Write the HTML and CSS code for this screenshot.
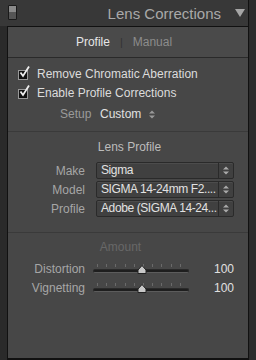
FILE: index.html
```html
<!DOCTYPE html>
<html lang="en">
<head>
    <meta charset="UTF-8">
    <title>Lens Corrections</title>
    <link rel="stylesheet" href="styles.css">
</head>
<body>
    <div class="app">
        <div class="edge-left"></div>
        <div class="main">
            <div class="header">
                <span class="toggle"></span>
                <span class="title">Lens Corrections</span>
                <span class="collapse"></span>
            </div>

            <div class="panel">
                <div class="tabs">
                    <span class="tab active">Profile</span>
                    <span class="tab-sep">|</span>
                    <span class="tab">Manual</span>
                </div>

                <div class="section options">
                    <label class="check-row">
                        <span class="checkbox">
                            <svg width="14" height="14" viewBox="0 0 14 14"><path d="M2.5 7.5 L5 11 L11 1.5" fill="none" stroke="#eee" stroke-width="1.8"/></svg>
                        </span>
                        Remove Chromatic Aberration
                    </label>
                    <label class="check-row">
                        <span class="checkbox">
                            <svg width="14" height="14" viewBox="0 0 14 14"><path d="M2.5 7.5 L5 11 L11 1.5" fill="none" stroke="#eee" stroke-width="1.8"/></svg>
                        </span>
                        Enable Profile Corrections
                    </label>
                    <div class="setup-row">
                        <span class="setup-label">Setup</span>
                        <span class="setup-value">Custom</span>
                        <span class="spin small">
                            <svg width="6" height="9" viewBox="0 0 6 9"><path d="M0 3.5 L3 0.5 L6 3.5 Z M0 5.5 L3 8.5 L6 5.5 Z" fill="#999"/></svg>
                        </span>
                    </div>
                </div>

                <div class="section profile">
                    <div class="section-title">Lens Profile</div>
                    <div class="field-row">
                        <span class="field-label">Make</span>
                        <div class="select">
                            <span class="select-text">Sigma</span>
                            <span class="select-spin"><svg width="6" height="9" viewBox="0 0 6 9"><path d="M0 3.5 L3 0.5 L6 3.5 Z M0 5.5 L3 8.5 L6 5.5 Z" fill="#aaa"/></svg></span>
                        </div>
                    </div>
                    <div class="field-row">
                        <span class="field-label">Model</span>
                        <div class="select">
                            <span class="select-text">SIGMA 14-24mm F2....</span>
                            <span class="select-spin"><svg width="6" height="9" viewBox="0 0 6 9"><path d="M0 3.5 L3 0.5 L6 3.5 Z M0 5.5 L3 8.5 L6 5.5 Z" fill="#aaa"/></svg></span>
                        </div>
                    </div>
                    <div class="field-row">
                        <span class="field-label">Profile</span>
                        <div class="select">
                            <span class="select-text">Adobe (SIGMA 14-24...</span>
                            <span class="select-spin"><svg width="6" height="9" viewBox="0 0 6 9"><path d="M0 3.5 L3 0.5 L6 3.5 Z M0 5.5 L3 8.5 L6 5.5 Z" fill="#aaa"/></svg></span>
                        </div>
                    </div>
                </div>

                <div class="section amount">
                    <div class="section-title dim">Amount</div>
                    <div class="slider-row">
                        <span class="field-label">Distortion</span>
                        <div class="slider">
                            <div class="ticks"></div>
                            <div class="track"></div>
                            <svg class="thumb" width="10" height="9" viewBox="0 0 10 9"><path d="M5 0.5 L9 5 L9 8.5 L1 8.5 L1 5 Z" fill="#c8c8c8" stroke="#222" stroke-width="1"/></svg>
                        </div>
                        <span class="slider-value">100</span>
                    </div>
                    <div class="slider-row">
                        <span class="field-label">Vignetting</span>
                        <div class="slider">
                            <div class="ticks"></div>
                            <div class="track"></div>
                            <svg class="thumb" width="10" height="9" viewBox="0 0 10 9"><path d="M5 0.5 L9 5 L9 8.5 L1 8.5 L1 5 Z" fill="#c8c8c8" stroke="#222" stroke-width="1"/></svg>
                        </div>
                        <span class="slider-value">100</span>
                    </div>
                </div>
            </div>
        </div>
        <div class="edge-right"></div>
    </div>
</body>
</html>
```

FILE: styles.css
```css
body {
    margin: 0;
    padding: 0;
    background-color: #2b2b2b;
    font-family: "Liberation Sans", Arial, sans-serif;
    font-size: 12px;
    color: #dcdcdc;
}

.app {
    display: flex;
    height: 360px;
    overflow: hidden;
}

.edge-left {
    width: 7px;
    flex: none;
    background-color: #2a2a2a;
    border-right: 1px solid #111;
}

.edge-right {
    width: 8px;
    flex: none;
    background-color: #2b2b2b;
    border-left: 1px solid #111;
    box-sizing: border-box;
}

.main {
    flex: 1;
    display: flex;
    flex-direction: column;
    background-color: #2b2b2b;
}

/* header */
.header {
    height: 26px;
    display: flex;
    align-items: center;
    background-color: #383838;
    margin-left: -8px;
    padding-left: 8px;
    margin-right: -8px;
    padding-right: 10px;
}

.toggle {
    width: 7px;
    height: 13px;
    border: 1px solid #1a1a1a;
    border-radius: 1px;
    background: linear-gradient(#8a8a8a 0, #8a8a8a 50%, #555 50%, #555 100%);
    margin-top: -1px;
}

.title {
    flex: 1;
    text-align: right;
    font-size: 15px;
    color: #a9a9a9;
    padding-right: 14px;
    padding-top: 1px;
}

.collapse {
    width: 0;
    height: 0;
    border-left: 5px solid transparent;
    border-right: 5px solid transparent;
    border-top: 8px solid #a6a6a6;
    margin-right: 1px;
}

/* panel */
.panel {
    flex: 1;
    background-color: #474747;
    border-top: 1px solid #111;
    border-bottom: 2px solid #111;
}

.tabs {
    height: 30px;
    display: flex;
    justify-content: center;
    align-items: center;
    gap: 9px;
    background-color: #4a4a4a;
    border-bottom: 1px solid #2a2a2a;
    padding-right: 8px;
}

.tab {
    color: #8c8c8c;
}

.tab.active {
    color: #e6e6e6;
}

.tab-sep {
    color: #333;
    font-size: 11px;
    margin: 0 1px;
}

.section {
    border-bottom: 1px solid #3a3a3a;
}

.options {
    padding: 6px 0 7px 10px;
}

.check-row {
    display: flex;
    align-items: center;
    height: 19px;
    gap: 9px;
}

.checkbox {
    width: 8px;
    height: 8px;
    border: 1px solid #999;
    background-color: #111;
    position: relative;
    margin-top: 2px;
}

.checkbox svg {
    position: absolute;
    left: -1px;
    top: -6px;
}

.setup-row {
    display: flex;
    align-items: center;
    height: 20px;
    margin-top: 2px;
    padding-left: 42px;
}

.setup-label {
    color: #9a9a9a;
    width: 40px;
}

.setup-value {
    color: #e0e0e0;
    margin-right: 8px;
}

.spin {
    display: flex;
}

.profile {
    padding: 6px 0 14px;
}

.section-title {
    height: 18px;
    line-height: 18px;
    text-align: center;
    color: #bcbcbc;
    padding-left: 3px;
    margin-bottom: 5px;
}

.section-title.dim {
    color: #686868;
    padding-right: 18px;
    margin-bottom: 3px;
}

.field-row {
    display: flex;
    align-items: center;
    height: 19px;
}

.field-label {
    width: 77px;
    text-align: right;
    color: #a6a6a6;
    flex: none;
}

.select {
    margin-left: 11px;
    width: 136px;
    height: 15px;
    display: flex;
    align-items: stretch;
    background-color: #404040;
    border: 1px solid #2a2a2a;
    border-radius: 2px;
    box-shadow: inset 0 1px 0 #4c4c4c;
}

.select-text {
    flex: 1;
    padding-left: 4px;
    line-height: 15px;
    color: #e2e2e2;
    white-space: nowrap;
    letter-spacing: -0.4px;
}

.select-spin {
    width: 14px;
    flex: none;
    border-left: 1px solid #2a2a2a;
    display: flex;
    align-items: center;
    justify-content: center;
}

.amount {
    border-bottom: none;
    padding-top: 5px;
}

.slider-row {
    display: flex;
    align-items: center;
    height: 19px;
}

.slider {
    margin-left: 8px;
    width: 96px;
    height: 14px;
    position: relative;
}

.ticks {
    position: absolute;
    left: 4px;
    right: 4px;
    top: 2px;
    height: 3px;
    background: repeating-linear-gradient(90deg, #6a6a6a 0, #6a6a6a 1px, transparent 1px, transparent 9.2px);
}

.track {
    position: absolute;
    left: 0;
    right: 0;
    top: 7px;
    height: 2px;
    background-color: #1e1e1e;
    border: 1px solid #2a2a2a;
    border-bottom-color: #5c5c5c;
    border-radius: 2px;
}

.thumb {
    position: absolute;
    left: 44px;
    top: 3px;
}

.slider-value {
    width: 45px;
    text-align: right;
    color: #e0e0e0;
}
```
